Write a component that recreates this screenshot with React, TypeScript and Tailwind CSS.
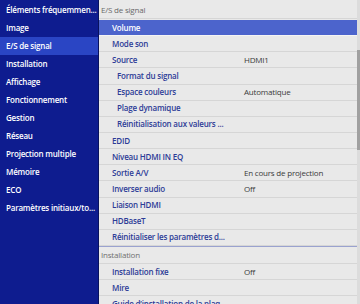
import React from 'react';

const sideItems = [
  'Éléments fréquemmen...',
  'Image',
  'E/S de signal',
  'Installation',
  'Affichage',
  'Fonctionnement',
  'Gestion',
  'Réseau',
  'Projection multiple',
  'Mémoire',
  'ECO',
  'Paramètres initiaux/to...',
];

type Row = { label: string; value?: string; sub?: boolean; active?: boolean };

const signalRows: Row[] = [
  { label: 'Volume', active: true },
  { label: 'Mode son' },
  { label: 'Source', value: 'HDMI1' },
  { label: 'Format du signal', sub: true },
  { label: 'Espace couleurs', value: 'Automatique', sub: true },
  { label: 'Plage dynamique', sub: true },
  { label: 'Réinitialisation aux valeurs ...', sub: true },
  { label: 'EDID' },
  { label: 'Niveau HDMI IN EQ' },
  { label: 'Sortie A/V', value: 'En cours de projection' },
  { label: 'Inverser audio', value: 'Off' },
  { label: 'Liaison HDMI' },
  { label: 'HDBaseT' },
  { label: 'Réinitialiser les paramètres d...' },
];

const installRows: Row[] = [
  { label: 'Installation fixe', value: 'Off' },
  { label: 'Mire' },
  { label: 'Guide d’installation de la plaq...' },
];

const MenuRow = ({ row }: { row: Row }) => (
  <div
    className={`h-[16.15px] flex items-center border-b ${
      row.active
        ? 'bg-[#4c64cc] border-[#f4f4f4] text-white'
        : 'border-[#d6d6d6] text-[#2d3c97]'
    }`}
  >
    <div className={`w-[145px] shrink-0 whitespace-nowrap font-semibold ${row.sub ? 'pl-[18px]' : 'pl-[13px]'}`}>
      {row.label}
    </div>
    {row.value && <div className="text-[#3a3a3a] whitespace-nowrap">{row.value}</div>}
  </div>
);

export default function App() {
  return (
    <div
      className="w-[360px] h-[304px] flex overflow-hidden bg-[#e9e9e9] text-[8px] leading-none tracking-[-0.2px]"
      style={{ fontFamily: '"Open Sans", "Noto Sans", sans-serif' }}
    >
      <div className="w-[99px] shrink-0 bg-[#0e1c8f] border-r border-[#08125e] pt-[1px]">
        {sideItems.map((s) => (
          <div
            key={s}
            className={`h-[18px] flex items-center pl-[6px] text-white font-semibold whitespace-nowrap ${
              s === 'E/S de signal' ? 'bg-[#2a45c4]' : ''
            }`}
          >
            {s}
          </div>
        ))}
      </div>
      <div className="flex-1 flex min-w-0">
        <div className="flex-1 min-w-0 overflow-hidden">
          <div className="h-[19px] flex items-center pl-[2px] pt-[1px] text-[#6a6a6a] border-b border-[#d6d6d6]">
            E/S de signal
          </div>
          <div className="pt-[1px]">
            {signalRows.map((r) => (
              <MenuRow key={r.label} row={r} />
            ))}
          </div>
          <div className="h-[18px] flex items-center pl-[2px] text-[#707070] border-t border-[#9aa2cf] border-b border-b-[#d6d6d6]">
            Installation
          </div>
          {installRows.map((r) => (
            <MenuRow key={r.label} row={r} />
          ))}
        </div>
        <div className="w-[3px] shrink-0 bg-[#dcdcdc] flex flex-col">
          <div className="h-[50px]" />
          <div className="h-[100px] bg-[#a0a0a0]" />
        </div>
      </div>
    </div>
  );
}
